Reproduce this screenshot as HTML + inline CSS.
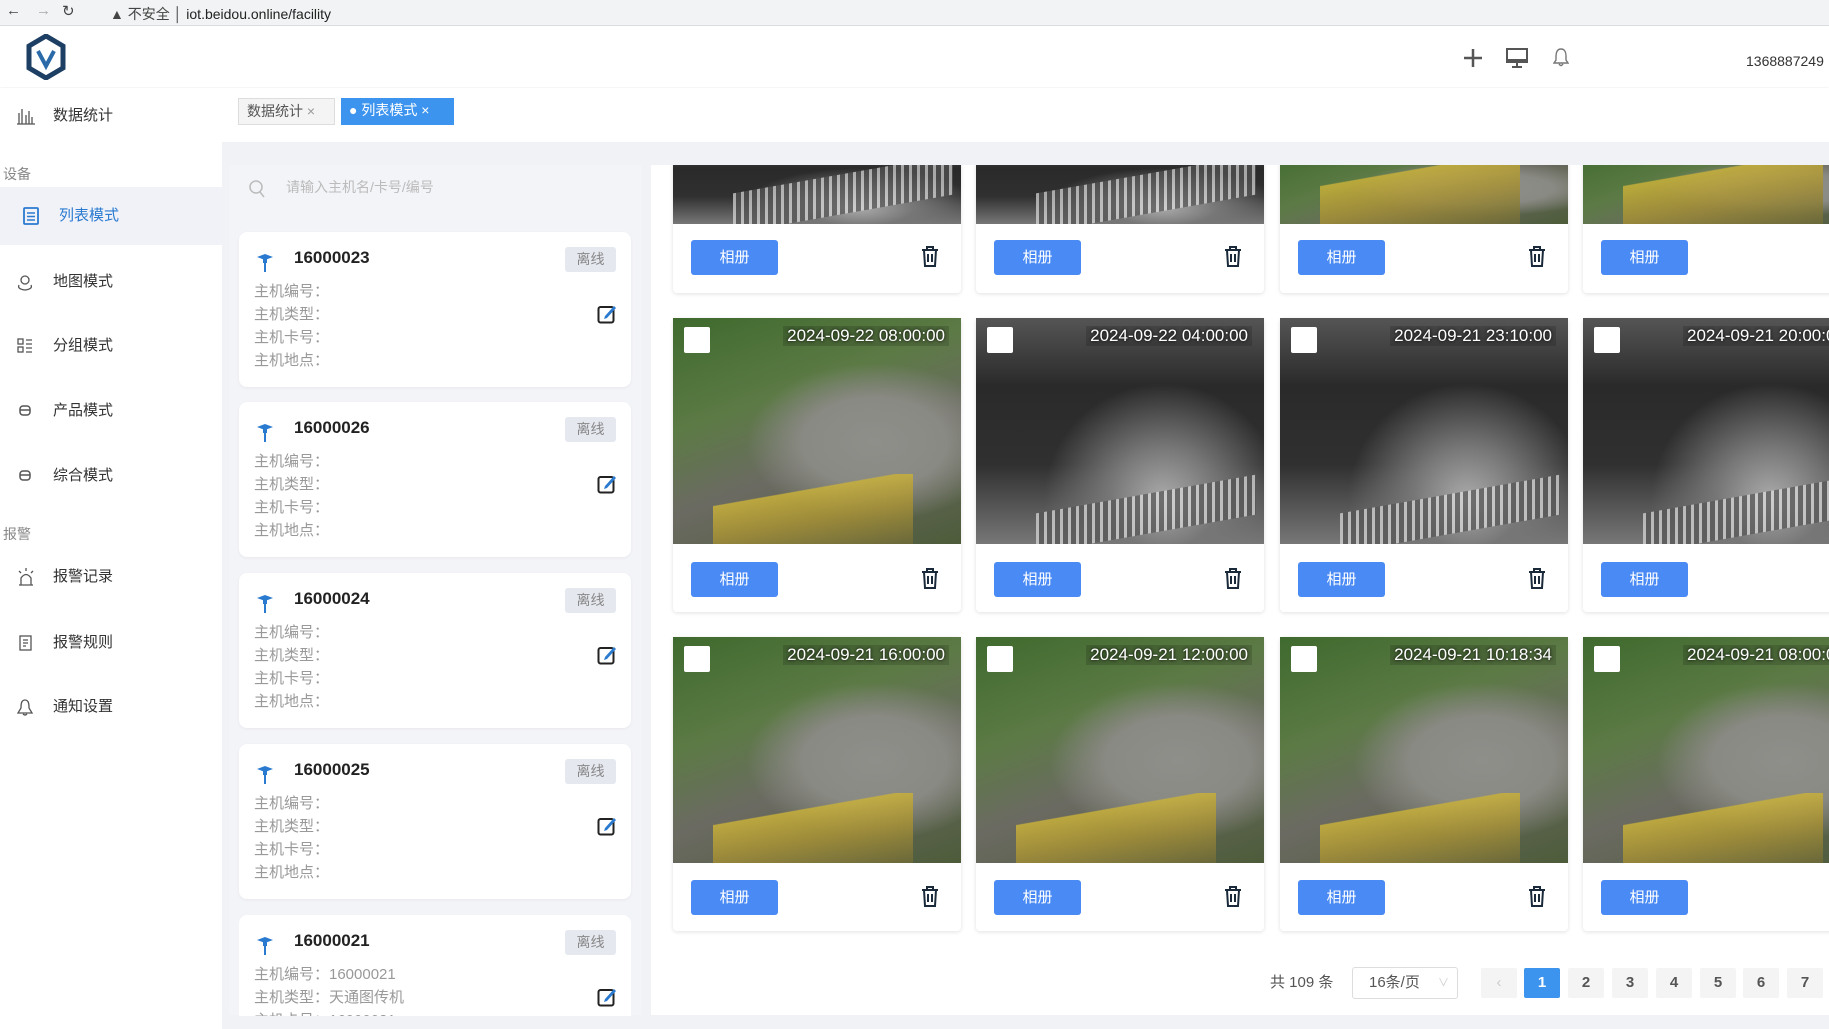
<!DOCTYPE html>
<html><head><meta charset="utf-8"><style>
*{margin:0;padding:0;box-sizing:border-box}
body{width:1829px;height:1029px;overflow:hidden;background:#fff;font-family:"Liberation Sans","Noto Sans CJK SC",sans-serif;position:relative;color:#333}
.a{position:absolute}
svg{display:block}
.chrome{left:0;top:0;width:1829px;height:26px;background:#f1f3f4;border-bottom:1px solid #dadce0;font-size:15px;color:#444}
.hdr{left:0;top:27px;width:1829px;height:60px;background:#fff;box-shadow:0 2px 4px rgba(0,0,0,.05)}
.side{left:0;top:88px;width:222px;height:941px;background:#fff}
.si{left:0;width:222px;height:40px;font-size:15px;color:#333;line-height:40px}
.si span{position:absolute;left:53px}
.si i{position:absolute;left:16px;top:11px;width:18px;height:18px;font-style:normal;line-height:0}
.sec{left:3px;font-size:14px;color:#888}
.main{left:222px;top:142px;width:1607px;height:887px;background:#f0f2f5}
.tab{top:98px;height:27px;font-size:14px;line-height:25px;padding:0 8px}
.lp{left:229px;top:165px;width:413px;height:850px;background:#f3f4f8}
.card{left:239px;width:392px;height:155px;background:#fff;border-radius:8px;box-shadow:0 1px 3px rgba(0,0,0,.05)}
.card .t{position:absolute;left:55px;top:16px;font-size:17px;font-weight:bold;color:#222}
.card .b{position:absolute;left:326px;top:15px;width:51px;height:25px;background:#e6e8f0;color:#888;border-radius:3px;font-size:14px;text-align:center;line-height:25px}
.card .f{position:absolute;left:15px;font-size:15px;color:#999}
.pin{position:absolute;left:16px;top:19px;width:20px;height:22px}
.ed{position:absolute;left:358px;top:72px;width:20px;height:20px}
.rp{left:651px;top:165px;width:1178px;height:850px;background:#fff}
.ic{width:288px;background:#fff;border-radius:4px;box-shadow:0 1px 4px rgba(0,0,0,.12)}
.img{position:absolute;left:0;top:0;width:288px;overflow:hidden}
.g{background:radial-gradient(ellipse at 70% 55%,#8e8f8a 0,#8a8a84 25%,transparent 45%),linear-gradient(160deg,#3f6a2e 0,#5c7a45 35%,#6b6a62 60%,#4d5c3a 100%)}
.g:after{content:"";position:absolute;left:40px;bottom:0;width:200px;height:70px;background:linear-gradient(170deg,transparent 0,transparent 30%,#c9b13a 31%,#a89236 60%,#6e6a3a 100%);opacity:.85}
.n{background:radial-gradient(ellipse at 65% 80%,#aaa 0,#777 20%,transparent 45%),linear-gradient(180deg,#555 0,#2a2a2a 30%,#303030 65%,#777 100%)}
.n:after{content:"";position:absolute;left:60px;bottom:10px;width:220px;height:40px;background:repeating-linear-gradient(90deg,#ddd 0 3px,#555 3px 8px);transform:skewY(-10deg);opacity:.7}
.ts{position:absolute;right:12px;top:8px;color:#fff;font-size:17px;text-shadow:0 0 3px #000;background:rgba(0,0,0,.15);padding:0 4px;z-index:2}
.cb{position:absolute;left:11px;top:9px;width:26px;height:26px;background:#fff;border-radius:2px;z-index:2}
.btn{position:absolute;left:18px;width:87px;height:35px;background:#4a8af4;color:#fff;border-radius:3px;font-size:15px;text-align:center;line-height:35px}
.tr{position:absolute;left:248px;width:18px;height:22px}
.pg{top:968px;height:30px;width:36px;border-radius:2px;background:#f4f4f5;color:#555;font-size:15px;font-weight:bold;text-align:center;line-height:30px}
</style></head><body>
<div class="a chrome"><span class="a" style="left:6px;top:2px">←</span><span class="a" style="left:36px;top:2px;color:#aaa">→</span><span class="a" style="left:62px;top:2px">↻</span><span class="a" style="left:110px;top:4px;font-size:14px">▲ 不安全 │ <span style="color:#222">iot.beidou.online/facility</span></span></div>
<div class="a hdr">
<svg class="a" style="left:25px;top:7px" width="42" height="46" viewBox="0 0 42 46"><path d="M21 2 L38 12 L38 34 L21 44 L4 34 L4 12Z" fill="none" stroke="#1d3f63" stroke-width="5"/><path d="M13 17 L21 32 L29 17" fill="none" stroke="#2a6aa8" stroke-width="4"/></svg>
<svg class="a" style="left:1463px;top:21px" width="20" height="20"><path d="M10 1V19M1 10H19" stroke="#555" stroke-width="2.5"/></svg>
<svg class="a" style="left:1506px;top:20px" width="22" height="22"><rect x="1" y="2" width="20" height="13" fill="none" stroke="#555" stroke-width="2"/><rect x="1" y="12" width="20" height="3" fill="#555"/><path d="M11 15V19M6 20H16" stroke="#555" stroke-width="2"/></svg>
<svg class="a" style="left:1553px;top:20px" width="16" height="20"><path d="M8 2C4 2 3 6 3 9V13L1 16H15L13 13V9C13 6 12 2 8 2ZM6 17Q8 20 10 17" fill="none" stroke="#777" stroke-width="1.4"/></svg>
<span class="a" style="left:1746px;top:26px;font-size:14px;color:#333">1368887249</span>
</div>
<div class="a side">
<div class="a si" style="top:8px"><i><svg width="20" height="18"><path d="M1 17H19M3 17V6M6 17V2M10 17V8M13 17V4M16 17V10" stroke="#555" stroke-width="1.3" fill="none"/></svg></i><span>数据统计</span></div>
<div class="a sec" style="top:76px">设备</div>
<div class="a si" style="top:99px;height:58px;line-height:58px;background:#f0f2f8;color:#2a7ad0"><i style="left:22px;top:20px"><svg width="18" height="18"><rect x="2" y="1" width="14" height="16" rx="1" fill="none" stroke="#2a7ad0" stroke-width="1.8"/><path d="M5 6H13M5 9.5H13M5 13H13" stroke="#2a7ad0" stroke-width="1.5"/></svg></i><span style="left:59px">列表模式</span></div>
<div class="a si" style="top:174px"><i><svg width="18" height="18"><circle cx="9" cy="7" r="4" fill="none" stroke="#555" stroke-width="1.3"/><path d="M3 12Q1 16 9 17Q17 16 15 12" fill="none" stroke="#555" stroke-width="1.3"/></svg></i><span>地图模式</span></div>
<div class="a si" style="top:238px"><i><svg width="18" height="18"><rect x="2" y="2" width="5" height="5" fill="none" stroke="#555" stroke-width="1.3"/><rect x="2" y="10" width="5" height="5" fill="none" stroke="#555" stroke-width="1.3"/><path d="M10 3H16M10 7H16M10 11H16M10 15H16" stroke="#555" stroke-width="1.3"/></svg></i><span>分组模式</span></div>
<div class="a si" style="top:303px"><i><svg width="18" height="18"><rect x="4" y="4" width="10" height="9" rx="3" fill="none" stroke="#555" stroke-width="1.5"/><path d="M4 8H14" stroke="#555" stroke-width="1.5"/></svg></i><span>产品模式</span></div>
<div class="a si" style="top:368px"><i><svg width="18" height="18"><rect x="4" y="4" width="10" height="9" rx="3" fill="none" stroke="#555" stroke-width="1.5"/><path d="M4 8H14" stroke="#555" stroke-width="1.5"/></svg></i><span>综合模式</span></div>
<div class="a sec" style="top:436px">报警</div>
<div class="a si" style="top:469px"><i><svg width="20" height="18"><path d="M5 17V10Q10 3 15 10V17ZM3 17H17M10 0V3M3 3L5 5M17 3L15 5" fill="none" stroke="#555" stroke-width="1.3"/></svg></i><span>报警记录</span></div>
<div class="a si" style="top:535px"><i><svg width="18" height="18"><rect x="4" y="2" width="11" height="14" fill="none" stroke="#555" stroke-width="1.3"/><path d="M7 6H12M7 9H12M7 12H10" stroke="#555" stroke-width="1.3"/></svg></i><span>报警规则</span></div>
<div class="a si" style="top:599px"><i><svg width="18" height="18"><path d="M9 2C5 2 5 7 5 10L2 15H16L13 10C13 7 13 2 9 2ZM7 16Q9 18 11 16" fill="none" stroke="#555" stroke-width="1.3"/></svg></i><span>通知设置</span></div>
</div>
<div class="a main"></div>
<div class="a" style="left:222px;top:88px;width:1607px;height:54px;background:#fff"></div>
<div class="a tab" style="left:238px;width:97px;border:1px solid #ddd;background:#f4f4f4;color:#555">数据统计 <span style="color:#999">×</span></div>
<div class="a tab" style="left:341px;width:113px;background:#3d94ee;color:#fff">● 列表模式 ×</div>
<div class="a lp"></div>
<svg class="a" style="left:248px;top:179px" width="18" height="20"><circle cx="8" cy="8" r="6" fill="none" stroke="#bbb" stroke-width="1.5"/><path d="M12 13L16 18" stroke="#bbb" stroke-width="1.5"/></svg>
<div class="a" style="left:286px;top:177px;font-size:14px;color:#bbb">请输入主机名/卡号/编号</div>

<div class="a card" style="top:232px"><svg class="pin" viewBox="0 0 20 22"><path d="M2 6L10 3L18 6L10 9Z" fill="#2a7ad0"/><rect x="8" y="6" width="4" height="6" fill="#2a7ad0"/><path d="M10 12V21" stroke="#2a7ad0" stroke-width="2"/></svg><div class="t">16000023</div><div class="b">离线</div><div class="f" style="top:48px">主机编号：</div><div class="f" style="top:71px">主机类型：</div><div class="f" style="top:94px">主机卡号：</div><div class="f" style="top:117px">主机地点：</div><svg class="ed" viewBox="0 0 20 20"><rect x="1.5" y="3" width="15" height="15.5" rx="2" fill="none" stroke="#222" stroke-width="2"/><path d="M8 12L17 2L19 4L10 14L7 15Z" fill="#2a7ad0"/></svg></div>
<div class="a card" style="top:402px"><svg class="pin" viewBox="0 0 20 22"><path d="M2 6L10 3L18 6L10 9Z" fill="#2a7ad0"/><rect x="8" y="6" width="4" height="6" fill="#2a7ad0"/><path d="M10 12V21" stroke="#2a7ad0" stroke-width="2"/></svg><div class="t">16000026</div><div class="b">离线</div><div class="f" style="top:48px">主机编号：</div><div class="f" style="top:71px">主机类型：</div><div class="f" style="top:94px">主机卡号：</div><div class="f" style="top:117px">主机地点：</div><svg class="ed" viewBox="0 0 20 20"><rect x="1.5" y="3" width="15" height="15.5" rx="2" fill="none" stroke="#222" stroke-width="2"/><path d="M8 12L17 2L19 4L10 14L7 15Z" fill="#2a7ad0"/></svg></div>
<div class="a card" style="top:573px"><svg class="pin" viewBox="0 0 20 22"><path d="M2 6L10 3L18 6L10 9Z" fill="#2a7ad0"/><rect x="8" y="6" width="4" height="6" fill="#2a7ad0"/><path d="M10 12V21" stroke="#2a7ad0" stroke-width="2"/></svg><div class="t">16000024</div><div class="b">离线</div><div class="f" style="top:48px">主机编号：</div><div class="f" style="top:71px">主机类型：</div><div class="f" style="top:94px">主机卡号：</div><div class="f" style="top:117px">主机地点：</div><svg class="ed" viewBox="0 0 20 20"><rect x="1.5" y="3" width="15" height="15.5" rx="2" fill="none" stroke="#222" stroke-width="2"/><path d="M8 12L17 2L19 4L10 14L7 15Z" fill="#2a7ad0"/></svg></div>
<div class="a card" style="top:744px"><svg class="pin" viewBox="0 0 20 22"><path d="M2 6L10 3L18 6L10 9Z" fill="#2a7ad0"/><rect x="8" y="6" width="4" height="6" fill="#2a7ad0"/><path d="M10 12V21" stroke="#2a7ad0" stroke-width="2"/></svg><div class="t">16000025</div><div class="b">离线</div><div class="f" style="top:48px">主机编号：</div><div class="f" style="top:71px">主机类型：</div><div class="f" style="top:94px">主机卡号：</div><div class="f" style="top:117px">主机地点：</div><svg class="ed" viewBox="0 0 20 20"><rect x="1.5" y="3" width="15" height="15.5" rx="2" fill="none" stroke="#222" stroke-width="2"/><path d="M8 12L17 2L19 4L10 14L7 15Z" fill="#2a7ad0"/></svg></div>
<div class="a" style="left:239px;top:915px;width:392px;height:101px;overflow:hidden"><div class="a card" style="left:0;top:0"><svg class="pin" viewBox="0 0 20 22"><path d="M2 6L10 3L18 6L10 9Z" fill="#2a7ad0"/><rect x="8" y="6" width="4" height="6" fill="#2a7ad0"/><path d="M10 12V21" stroke="#2a7ad0" stroke-width="2"/></svg><div class="t">16000021</div><div class="b">离线</div><div class="f" style="top:48px">主机编号：16000021</div><div class="f" style="top:71px">主机类型：天通图传机</div><div class="f" style="top:94px">主机卡号：16000021</div><svg class="ed" viewBox="0 0 20 20"><rect x="1.5" y="3" width="15" height="15.5" rx="2" fill="none" stroke="#222" stroke-width="2"/><path d="M8 12L17 2L19 4L10 14L7 15Z" fill="#2a7ad0"/></svg></div></div>

<div class="a rp"></div>
<div class="a" style="left:651px;top:165px;width:1178px;height:790px;overflow:hidden">
<div class="a ic" style="left:22px;top:-20px;height:148px"><div class="img n" style="height:79px"></div><div class="btn" style="top:95px">相册</div><svg class="tr" style="top:101px" viewBox="0 0 18 22"><path d="M1 4H17M6 4V1H12V4M3 4L4 20H14L15 4M7 8V16M11 8V16" fill="none" stroke="#1a2a3a" stroke-width="2"/></svg></div>
<div class="a ic" style="left:325px;top:-20px;height:148px"><div class="img n" style="height:79px"></div><div class="btn" style="top:95px">相册</div><svg class="tr" style="top:101px" viewBox="0 0 18 22"><path d="M1 4H17M6 4V1H12V4M3 4L4 20H14L15 4M7 8V16M11 8V16" fill="none" stroke="#1a2a3a" stroke-width="2"/></svg></div>
<div class="a ic" style="left:629px;top:-20px;height:148px"><div class="img g" style="height:79px"></div><div class="btn" style="top:95px">相册</div><svg class="tr" style="top:101px" viewBox="0 0 18 22"><path d="M1 4H17M6 4V1H12V4M3 4L4 20H14L15 4M7 8V16M11 8V16" fill="none" stroke="#1a2a3a" stroke-width="2"/></svg></div>
<div class="a ic" style="left:932px;top:-20px;height:148px"><div class="img g" style="height:79px"></div><div class="btn" style="top:95px">相册</div></div>
<div class="a ic" style="left:22px;top:153px;height:294px"><div class="img g" style="height:226px"><div class="cb"></div><div class="ts">2024-09-22 08:00:00</div></div><div class="btn" style="top:244px">相册</div><svg class="tr" style="top:250px" viewBox="0 0 18 22"><path d="M1 4H17M6 4V1H12V4M3 4L4 20H14L15 4M7 8V16M11 8V16" fill="none" stroke="#1a2a3a" stroke-width="2"/></svg></div>
<div class="a ic" style="left:325px;top:153px;height:294px"><div class="img n" style="height:226px"><div class="cb"></div><div class="ts">2024-09-22 04:00:00</div></div><div class="btn" style="top:244px">相册</div><svg class="tr" style="top:250px" viewBox="0 0 18 22"><path d="M1 4H17M6 4V1H12V4M3 4L4 20H14L15 4M7 8V16M11 8V16" fill="none" stroke="#1a2a3a" stroke-width="2"/></svg></div>
<div class="a ic" style="left:629px;top:153px;height:294px"><div class="img n" style="height:226px"><div class="cb"></div><div class="ts">2024-09-21 23:10:00</div></div><div class="btn" style="top:244px">相册</div><svg class="tr" style="top:250px" viewBox="0 0 18 22"><path d="M1 4H17M6 4V1H12V4M3 4L4 20H14L15 4M7 8V16M11 8V16" fill="none" stroke="#1a2a3a" stroke-width="2"/></svg></div>
<div class="a ic" style="left:932px;top:153px;height:294px"><div class="img n" style="height:226px"><div class="cb"></div><div class="ts" style="left:100px;right:auto">2024-09-21 20:00:00</div></div><div class="btn" style="top:244px">相册</div></div>
<div class="a ic" style="left:22px;top:472px;height:294px"><div class="img g" style="height:226px"><div class="cb"></div><div class="ts">2024-09-21 16:00:00</div></div><div class="btn" style="top:243px">相册</div><svg class="tr" style="top:249px" viewBox="0 0 18 22"><path d="M1 4H17M6 4V1H12V4M3 4L4 20H14L15 4M7 8V16M11 8V16" fill="none" stroke="#1a2a3a" stroke-width="2"/></svg></div>
<div class="a ic" style="left:325px;top:472px;height:294px"><div class="img g" style="height:226px"><div class="cb"></div><div class="ts">2024-09-21 12:00:00</div></div><div class="btn" style="top:243px">相册</div><svg class="tr" style="top:249px" viewBox="0 0 18 22"><path d="M1 4H17M6 4V1H12V4M3 4L4 20H14L15 4M7 8V16M11 8V16" fill="none" stroke="#1a2a3a" stroke-width="2"/></svg></div>
<div class="a ic" style="left:629px;top:472px;height:294px"><div class="img g" style="height:226px"><div class="cb"></div><div class="ts">2024-09-21 10:18:34</div></div><div class="btn" style="top:243px">相册</div><svg class="tr" style="top:249px" viewBox="0 0 18 22"><path d="M1 4H17M6 4V1H12V4M3 4L4 20H14L15 4M7 8V16M11 8V16" fill="none" stroke="#1a2a3a" stroke-width="2"/></svg></div>
<div class="a ic" style="left:932px;top:472px;height:294px"><div class="img g" style="height:226px"><div class="cb"></div><div class="ts" style="left:100px;right:auto">2024-09-21 08:00:00</div></div><div class="btn" style="top:243px">相册</div></div>
</div>
<div class="a" style="left:1270px;top:971px;font-size:15px;color:#555">共 109 条</div>
<div class="a" style="left:1352px;top:967px;width:106px;height:32px;border:1px solid #ddd;border-radius:3px;font-size:15px;color:#555;line-height:30px;padding-left:16px;white-space:nowrap">16条/页<span class="a" style="right:8px;top:0;color:#ccc;font-size:11px">∨</span></div>
<div class="a pg" style="left:1481px;color:#ccc;font-weight:normal">‹</div>
<div class="a pg" style="left:1524px;background:#3d94ee;color:#fff">1</div>
<div class="a pg" style="left:1568px">2</div>
<div class="a pg" style="left:1612px">3</div>
<div class="a pg" style="left:1656px">4</div>
<div class="a pg" style="left:1700px">5</div>
<div class="a pg" style="left:1743px">6</div>
<div class="a pg" style="left:1787px">7</div>
</body></html>
